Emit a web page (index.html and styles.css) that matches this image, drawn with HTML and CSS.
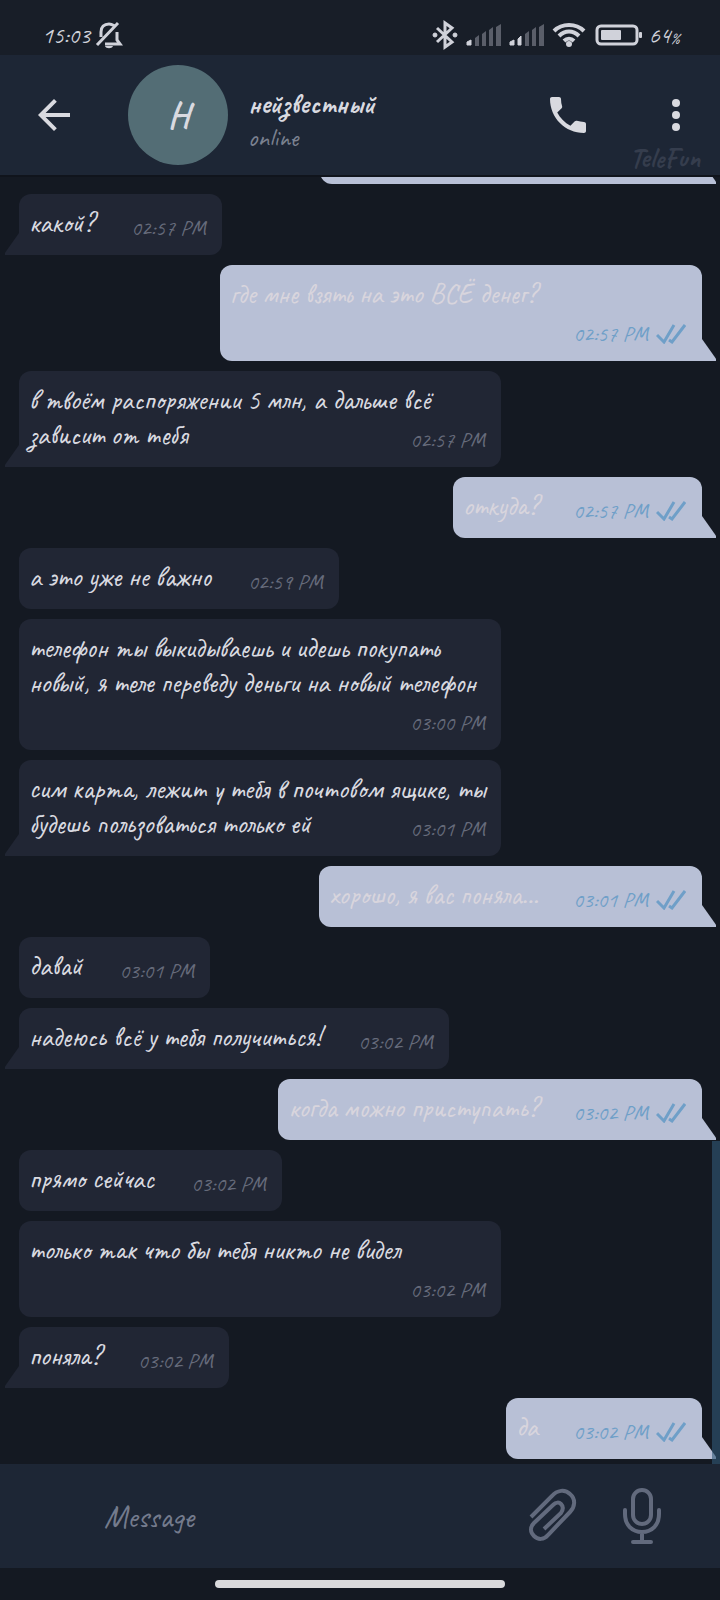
FILE: index.html
```html
<!DOCTYPE html>
<html lang="ru">

<head>
	<meta charset="UTF-8">
	<meta name="viewport" content="width=device-width,initial-scale=1">
	<title>нейзвестный</title>
	<link rel="stylesheet" href="styles.css">
</head>

<body>

	<svg class="defs" aria-hidden="true">
		<symbol id="ticks" viewBox="0 0 30 20">
			<path d="M1 11L8 18L18 1M13 16L16 18L29 1" fill="none" stroke="currentColor" stroke-width="3"/>
		</symbol>
	</svg>

	<div class="status">
		<span>15:03</span>
		<svg class="bell" width="28" height="28" viewBox="0 0 28 28" fill="none" stroke="currentColor" stroke-width="3">
			<path d="M6 16V11C6 6 9 3 14 3C16 3 18 4 20 5M22 11V19L25 23H10M2 24L23 2"/>
			<path d="M10 25H18C17 28 11 28 10 25Z" fill="currentColor" stroke="none"/>
		</svg>
		<svg class="bt" width="28" height="30" viewBox="0 0 28 30" fill="none" stroke="currentColor" stroke-width="3">
			<path d="M6 8L21 22L14 27V3L21 8L6 22"/>
			<circle cx="4" cy="15" r="2" fill="currentColor" stroke-width="1"/>
			<circle cx="24" cy="15" r="2" fill="currentColor" stroke-width="1"/>
		</svg>
		<svg class="signal" width="36" height="24" viewBox="0 0 36 24" fill="#5a5e69">
			<path d="M1 22V19L5 17V22Z" fill="#d0d2da" stroke="#d0d2da"/>
			<path d="M9 23V15L13 12V23ZM16 23V11L20 8V23ZM23 23V7L27 4V23ZM30 23V4L35 1V23Z"/>
		</svg>
		<svg class="signal" width="36" height="24" viewBox="0 0 36 24" fill="#5a5e69">
			<path d="M1 22V19L5 17V22ZM9 22V16L12 13V22Z" fill="#d0d2da" stroke="#d0d2da"/>
			<path d="M16 23V11L20 8V23ZM23 23V7L27 4V23ZM30 23V4L35 1V23Z"/>
		</svg>
		<svg class="wifi" width="34" height="26" viewBox="0 0 34 26" fill="none" stroke="currentColor" stroke-width="4">
			<path d="M2 9C10 1 24 1 32 9M7 14C13 8 21 8 27 14M12 19C15 16 19 16 22 19"/>
			<circle cx="17" cy="22" r="3" fill="currentColor" stroke="none"/>
		</svg>
		<svg class="battery" width="48" height="22" viewBox="0 0 48 22">
			<rect x="2" y="2" width="40" height="18" rx="4" fill="none" stroke="currentColor" stroke-width="3"/>
			<rect x="6" y="6" width="20" height="10" rx="1" fill="currentColor"/>
			<rect x="44" y="8" width="3" height="6" rx="1" fill="currentColor"/>
		</svg>
		<span>64<small>%</small></span>
	</div>

	<header class="header">
		<button class="icon back" aria-label="Back">
			<svg width="48" height="48" viewBox="0 0 24 24" fill="currentColor"><path d="M20 11H7.8l5.6-5.6L12 4l-8 8 8 8 1.4-1.4L7.8 13H20v-2z"/></svg>
		</button>
		<div class="avatar">Н</div>
		<div class="who">
			<h1>нейзвестный</h1>
			<p>online</p>
		</div>
		<button class="icon" aria-label="Call">
			<svg width="48" height="48" viewBox="0 0 24 24" fill="currentColor"><path d="M20 15.5c-1.25 0-2.45-.2-3.57-.57-.35-.11-.74-.03-1.02.24l-2.2 2.2c-2.83-1.44-5.15-3.75-6.59-6.58l2.2-2.21c.28-.27.36-.66.25-1.01A11.36 11.36 0 0 1 8.5 4c0-.55-.45-1-1-1H4c-.55 0-1 .45-1 1 0 9.390 7.610 17 17 17 .55 0 1-.45 1-1v-3.500c0-.55-.45-1-1-1z"/></svg>
		</button>
		<button class="icon more" aria-label="More">
			<svg width="48" height="48" viewBox="0 0 24 24" fill="currentColor"><circle cx="12" cy="6" r="2"/><circle cx="12" cy="12" r="2"/><circle cx="12" cy="18" r="2"/></svg>
		</button>
		<span class="brand">TeleFun</span>
	</header>

	<main class="chat">
		<div class="msg out tail cut"></div>
		<div class="msg in tail">какой?<i></i><time>02:57 PM</time></div>
		<div class="msg out tail long">где мне взять на это ВСЁ денег?<i></i><time>02:57 PM <svg><use href="#ticks"/></svg></time></div>
		<div class="msg in tail">в твоём распоряжении 5 млн, а дальше всё зависит от тебя<i></i><time>02:57 PM</time></div>
		<div class="msg out tail">откуда?<i></i><time>02:57 PM <svg><use href="#ticks"/></svg></time></div>
		<div class="msg in">а это уже не важно<i></i><time>02:59 PM</time></div>
		<div class="msg in">телефон ты выкидываешь и идешь покупать новый, я теле переведу деньги на новый телефон<i></i><time>03:00 PM</time></div>
		<div class="msg in tail">сим карта, лежит у тебя в почтовом ящике, ты будешь пользоваться только ей<i></i><time>03:01 PM</time></div>
		<div class="msg out tail">хорошо, я вас поняла...<i></i><time>03:01 PM <svg><use href="#ticks"/></svg></time></div>
		<div class="msg in">давай<i></i><time>03:01 PM</time></div>
		<div class="msg in tail">надеюсь всё у тебя получиться!<i></i><time>03:02 PM</time></div>
		<div class="msg out tail">когда можно приступать?<i></i><time>03:02 PM <svg><use href="#ticks"/></svg></time></div>
		<div class="msg in">прямо сейчас<i></i><time>03:02 PM</time></div>
		<div class="msg in long">только так что бы тебя никто не видел<i></i><time>03:02 PM</time></div>
		<div class="msg in tail">поняла?<i></i><time>03:02 PM</time></div>
		<div class="msg out tail">да<i></i><time>03:02 PM <svg><use href="#ticks"/></svg></time></div>
		<div class="edge"></div>
	</main>

	<form class="compose">
		<input type="text" placeholder="Message" aria-label="Message">
		<button type="button" class="icon" aria-label="Attach">
			<svg width="48" height="56" viewBox="0 0 48 56" fill="none" stroke="currentColor" stroke-width="4">
				<path d="M2 29L23 8C28 2 36 1 41 6C47 11 46 19 41 24L19 47C15 52 9 52 5 48C1 44 1 39 5 35L24 17C27 14 30 14 32 16C35 19 34 22 32 25L15 41"/>
			</svg>
		</button>
		<button type="button" class="icon" aria-label="Voice message">
			<svg width="40" height="58" viewBox="0 0 40 58" fill="none" stroke="currentColor" stroke-width="4" stroke-linecap="round">
				<rect x="11" y="3" width="18" height="34" rx="9"/>
				<path d="M3 23V27C3 38 10 45 20 45S37 38 37 27V23M20 45V55M11 55H29"/>
			</svg>
		</button>
	</form>

	<div class="nav"><div class="pill"></div></div>

</body>

</html>
```
FILE: styles.css
```css
* { box-sizing: border-box; }

body {
	margin: 0;
	height: 100vh;
	display: flex;
	flex-direction: column;
	background-color: #141922;
	color: #d9dae0;
	font-family: Caveat, "Open Sans", sans-serif;
	font-size: 28px;
}

button, input {
	font: inherit;
	color: inherit;
	background: none;
	border: 0;
	padding: 0;
}

.defs {
	position: absolute;
	width: 0;
	height: 0;
}

.status {
	flex: none;
	display: flex;
	align-items: center;
	height: 55px;
	padding: 14px 40px 0 42px;
	background-color: #181e28;
	color: #d0d2da;
	font-size: 24px;
}

.status small { font-size: 16px; }
.bell { margin-left: 5px; }
.bt { margin-left: auto; }
.signal { margin-left: 7px; }
.wifi { margin-left: 7px; }
.battery { margin: 0 6px 0 9px; }

.header {
	flex: none;
	position: relative;
	display: flex;
	align-items: center;
	height: 120px;
	padding: 0 20px 0 30px;
	background-color: #1d2635;
}

.icon {
	display: block;
	flex: none;
}

.icon svg { display: block; }

.avatar {
	width: 100px;
	height: 100px;
	margin: 0 20px 0 50px;
	border-radius: 50%;
	background-color: #536d75;
	font-size: 36px;
	font-weight: 600;
	line-height: 100px;
	text-align: center;
}

.who {
	flex: 1;
	min-width: 0;
	padding-top: 10px;
}

.who h1 {
	margin: 0;
	font-size: 28px;
	line-height: 36px;
}

.who p {
	margin: 0;
	color: #7b8190;
	font-size: 26px;
	line-height: 32px;
}

.more { margin-left: 60px; }

.brand {
	position: absolute;
	right: 20px;
	bottom: 0;
	color: #353d4d;
	font-size: 28px;
	font-weight: bold;
}

.chat {
	position: relative;
	flex: 1;
	min-height: 0;
	display: flex;
	flex-direction: column;
	justify-content: flex-end;
	gap: 10px;
	padding: 0 18px 5px 19px;
	overflow: hidden;
	border-top: 2px solid #10141c;
}

.msg {
	position: relative;
	flex: none;
	max-width: 482px;
	padding: 11px 12px 15px 10px;
	border-radius: 12px;
	font-weight: 500;
	line-height: 35px;
}

.in {
	align-self: flex-start;
	background-color: #212634;
}

.out {
	align-self: flex-end;
	background-color: #b8c0d6;
	color: #d8d5dd;
}

.cut {
	width: 382px;
	height: 61px;
}

/* keeps room for the time at the end of the last line */
.msg i {
	display: inline-block;
	width: 116px;
}

.out i { width: 152px; }

/* time goes on a line of its own */
.long i { width: 200px; }

.msg time {
	position: absolute;
	right: 16px;
	bottom: 17px;
	display: flex;
	align-items: center;
	gap: 8px;
	color: #666b7b;
	font-size: 22px;
	font-weight: 400;
	line-height: 20px;
}

.out time { color: #6f9fc8; }

.msg time svg {
	width: 30px;
	height: 20px;
}

.tail::after {
	content: "";
	position: absolute;
	bottom: 0;
	width: 14px;
	height: 22px;
	background-color: inherit;
}

.in.tail { border-bottom-left-radius: 0; }
.out.tail { border-bottom-right-radius: 0; }

.in.tail::after {
	right: 100%;
	clip-path: polygon(100% 0, 100% 100%, 0 100%, 0 90%);
}

.out.tail::after {
	left: 100%;
	clip-path: polygon(0 0, 100% 90%, 100% 100%, 0 100%);
}

.edge {
	position: absolute;
	right: 0;
	bottom: 0;
	width: 8px;
	height: 323px;
	background-color: rgba(48, 88, 120, 0.6);
}

.compose {
	flex: none;
	display: flex;
	align-items: center;
	height: 104px;
	padding: 0 58px 0 104px;
	background-color: #1d2635;
	color: #626a7d;
}

.compose input {
	flex: 1;
	min-width: 0;
	font-size: 32px;
	outline: none;
}

.compose input::placeholder {
	color: #747b8d;
	opacity: 1;
}

.compose .icon + .icon { margin-left: 45px; }

.nav {
	flex: none;
	height: 32px;
	padding-top: 12px;
}

.pill {
	width: 290px;
	height: 8px;
	margin: 0 auto;
	border-radius: 4px;
	background-color: #d9d9dc;
}
```
